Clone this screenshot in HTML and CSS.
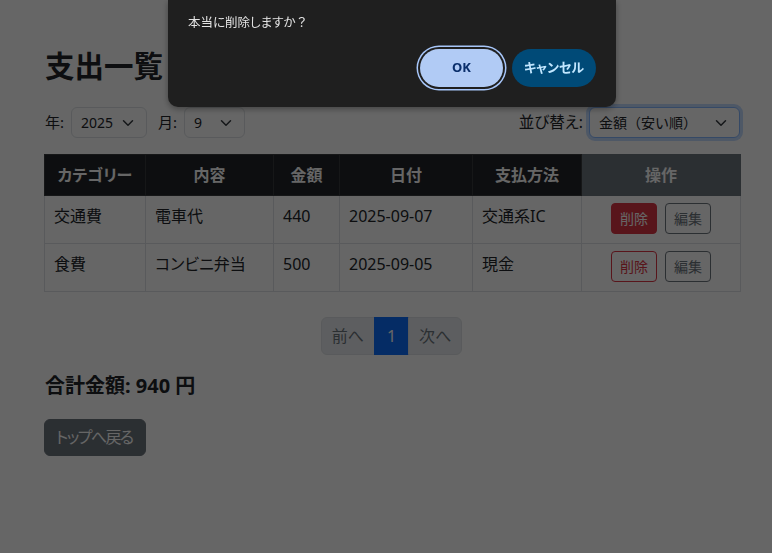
FILE: index.html
```html
<!DOCTYPE html>
<html lang="ja">
<head>
<meta charset="utf-8">
<title>支出一覧</title>
<link rel="stylesheet" href="styles.css">
</head>
<body>
<div class="page">
  <h2 class="title">支出一覧</h2>

  <div class="filters">
    <div class="group">
      <label class="lbl">年:</label>
      <div class="select sel-year"><span>2025</span>
        <svg width="16" height="12" viewBox="0 0 16 16"><path d="M2 5l6 6 6-6" fill="none" stroke="#343a40" stroke-width="2" stroke-linecap="round" stroke-linejoin="round"/></svg>
      </div>
      <label class="lbl lbl-month">月:</label>
      <div class="select sel-month"><span>9</span>
        <svg width="16" height="12" viewBox="0 0 16 16"><path d="M2 5l6 6 6-6" fill="none" stroke="#343a40" stroke-width="2" stroke-linecap="round" stroke-linejoin="round"/></svg>
      </div>
    </div>
    <div class="group">
      <label class="lbl lbl-sort">並び替え:</label>
      <div class="select sel-sort focus"><span class="full">金額（安い順）</span>
        <svg width="16" height="12" viewBox="0 0 16 16"><path d="M2 5l6 6 6-6" fill="none" stroke="#343a40" stroke-width="2" stroke-linecap="round" stroke-linejoin="round"/></svg>
      </div>
    </div>
  </div>

  <table class="tbl">
    <colgroup>
      <col class="c1"><col class="c2"><col class="c3"><col class="c4"><col class="c5"><col class="c6">
    </colgroup>
    <thead>
      <tr>
        <th>カテゴリー</th><th>内容</th><th>金額</th><th>日付</th><th>支払方法</th><th class="th-op">操作</th>
      </tr>
    </thead>
    <tbody>
      <tr>
        <td>交通費</td><td>電車代</td><td>440</td><td>2025-09-07</td><td>交通系IC</td>
        <td class="ops"><span class="btn btn-danger">削除</span><span class="btn btn-outline">編集</span></td>
      </tr>
      <tr>
        <td>食費</td><td>コンビニ弁当</td><td>500</td><td>2025-09-05</td><td>現金</td>
        <td class="ops"><span class="btn btn-outline-danger">削除</span><span class="btn btn-outline">編集</span></td>
      </tr>
    </tbody>
  </table>

  <nav class="pager">
    <span class="page-link disabled first">前へ</span>
    <span class="page-link active">1</span>
    <span class="page-link disabled last">次へ</span>
  </nav>

  <h5 class="total">合計金額: 940 円</h5>

  <span class="btn-back">トップへ戻る</span>
</div>

<div class="backdrop"></div>

<div class="dialog">
  <p class="dlg-msg">本当に削除しますか<span class="full">？</span></p>
  <div class="dlg-actions">
    <span class="dlg-ok">OK</span>
    <span class="dlg-cancel">キャンセル</span>
  </div>
</div>
</body>
</html>
```

FILE: styles.css
```css
* { box-sizing: border-box; }
html, body { margin: 0; padding: 0; }
body {
  font-family: "Noto Sans", "Noto Sans CJK JP", sans-serif;
  font-feature-settings: "palt";
  font-size: 16px;
  line-height: 1.5;
  color: #212529;
  background: #fff;
  width: 772px;
  height: 553px;
  overflow: hidden;
}
.full { font-feature-settings: normal; }
.page {
  padding: 49px 32px 0 44px;
}
.title {
  margin: 0 0 24px 1px;
  font-size: 29.5px;
  line-height: 34px;
  font-weight: 700;
}
.filters {
  display: flex;
  justify-content: space-between;
  align-items: center;
  margin-bottom: 16px;
  height: 31px;
}
.group {
  display: flex;
  align-items: center;
}
.lbl {
  font-size: 15px;
  margin: 0 7px 0 1px;
}
.lbl-month { margin-left: 11px; }
.lbl-sort { font-size: 15.5px; margin-right: 6px; }
.select {
  display: flex;
  align-items: center;
  justify-content: space-between;
  height: 31px;
  padding: 0 10px 0 9px;
  border: 1px solid #dee2e6;
  border-radius: 6px;
  font-size: 14px;
  background: #fff;
}
.sel-year { width: 76px; }
.sel-month { width: 61px; }
.sel-sort { width: 151px; }
.select.focus {
  border-color: #86b7fe;
  box-shadow: 0 0 0 3px rgba(13,110,253,.25);
}

.tbl {
  width: 696px;
  table-layout: fixed;
  border-collapse: collapse;
  margin-bottom: 25px;
}
.c1 { width: 101px; } .c2 { width: 128px; } .c3 { width: 66px; }
.c4 { width: 133px; } .c5 { width: 109px; } .c6 { width: 159px; }
.tbl th {
  background: #212529;
  color: #fff;
  font-weight: 700;
  text-align: center;
  padding: 8px;
  height: 41px;
  border: 1px solid #373b3e;
  line-height: 24px;
}
.tbl th.th-op { background: #6c757d; border-color: #6c757d; }
.tbl td {
  padding: 8px 9px;
  border: 1px solid #dee2e6;
  vertical-align: top;
  height: 48px;
  line-height: 24px;
}
.tbl td.ops {
  text-align: center;
  padding: 7px 8px 8px;
}
.btn {
  display: inline-block;
  font-size: 14px;
  line-height: 21px;
  padding: 4px 8px;
  border-radius: 4px;
  border: 1px solid transparent;
  margin: 0 4px;
}
.btn-danger { background: #dc3545; border-color: #dc3545; color: #fff; }
.btn-outline-danger { color: #dc3545; border-color: #dc3545; }
.btn-outline { color: #6c757d; border-color: #6c757d; }

.pager {
  display: flex;
  justify-content: center;
  margin-bottom: 19px;
}
.page-link {
  display: block;
  padding: 6px 10px;
  line-height: 24px;
  border: 1px solid #dee2e6;
  margin-left: -1px;
}
.page-link.disabled { background: #e9ecef; color: #6c757d; }
.page-link.active { background: #0d6efd; border-color: #0d6efd; color: #fff; padding: 6px 12px; }
.page-link.first { border-radius: 6px 0 0 6px; }
.page-link.last { border-radius: 0 6px 6px 0; }

.total {
  margin: 0 0 21px 1px;
  font-size: 20px;
  line-height: 24px;
  font-weight: 700;
}
.btn-back {
  display: inline-block;
  background: #6c757d;
  color: #fff;
  padding: 5px 12px 5px 11px;
  line-height: 25px;
  letter-spacing: -1.6px;
  border-radius: 6px;
  border: 1px solid #6c757d;
}

.backdrop {
  position: fixed;
  inset: 0;
  background: rgba(0,0,0,.6);
}
.dialog {
  position: fixed;
  top: 0;
  left: 168px;
  width: 448px;
  height: 107px;
  background: #1f1f1f;
  border-radius: 0 0 10px 10px;
  box-shadow: 0 2px 6px rgba(0,0,0,.35);
  padding: 14px 20px 0 20px;
  color: #e3e3e3;
}
.dlg-msg {
  margin: 0;
  font-size: 12.5px;
  line-height: 18px;
}
.dlg-actions {
  display: flex;
  justify-content: flex-end;
  gap: 9px;
  margin-top: 17px;
}
.dlg-ok, .dlg-cancel {
  display: flex;
  align-items: center;
  justify-content: center;
  height: 38px;
  border-radius: 19px;
  font-size: 13px;
  font-weight: 700;
}
.dlg-ok {
  width: 83px;
  background: #b1cbf5;
  color: #0b2f6b;
  box-shadow: 0 0 0 2px #1f1f1f, 0 0 0 3.5px #a8c7fa;
}
.dlg-cancel {
  width: 84px;
  background: #004a77;
  color: #c2e7ff;
}
```
